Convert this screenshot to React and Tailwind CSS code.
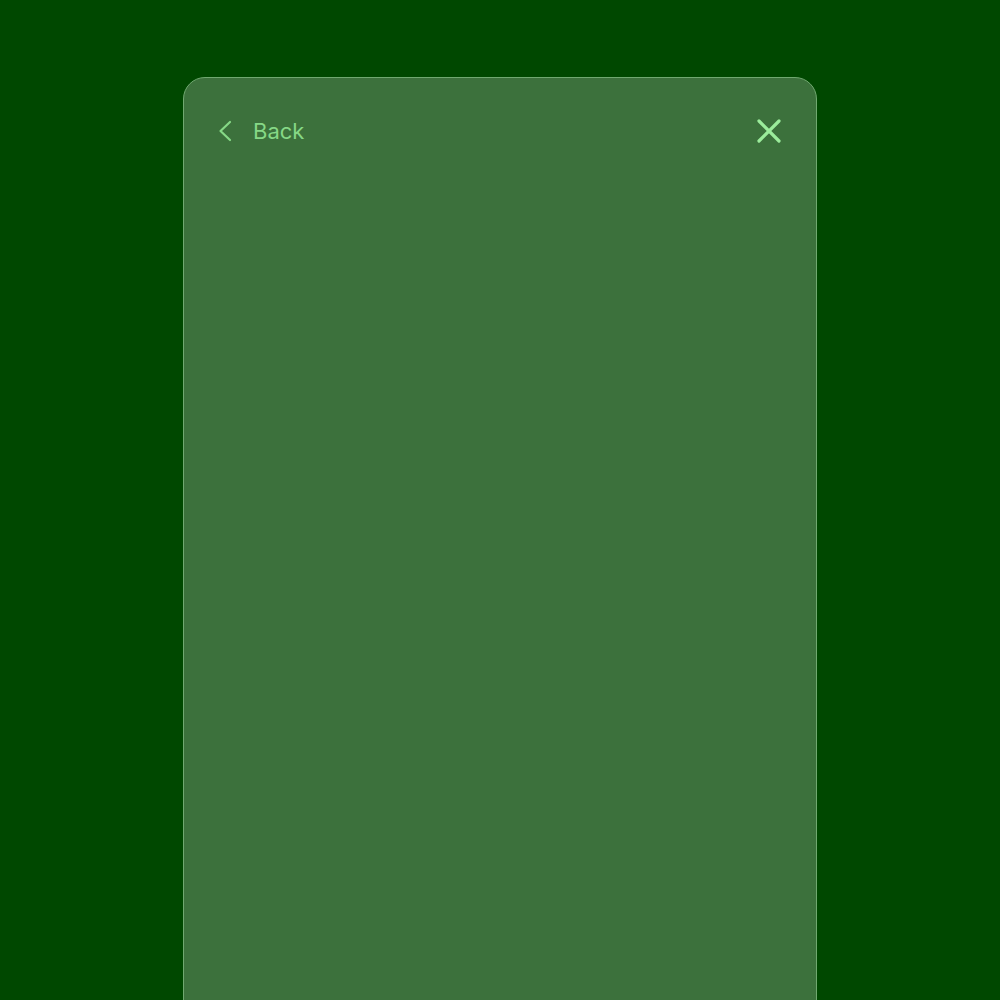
import React from 'react';

const Header = () => (
  <div className="flex items-center justify-between pl-[33px] pr-[34px] pt-[41px]">
    <button className="flex items-center gap-[20px] text-[#86d886]">
      <svg width="16" height="22" viewBox="0 0 16 22" fill="none" stroke="currentColor" strokeWidth="2.2" strokeLinecap="round" strokeLinejoin="round">
        <path d="M13 2 3.5 11 13 20" />
      </svg>
      <span className="text-[22px] leading-[22px] font-['Inter',sans-serif]">Back</span>
    </button>
    <button className="text-[#9bec9b]">
      <svg width="26" height="24" viewBox="0 0 26 24" fill="none" stroke="currentColor" strokeWidth="3.2" strokeLinecap="round">
        <path d="M3 2 23 22M23 2 3 22" />
      </svg>
    </button>
  </div>
);

export default function App() {
  return (
    <div className="h-screen w-full overflow-hidden bg-[#004800] flex justify-center pt-[77px]">
      <div className="w-[634px] h-[1000px] shrink-0 rounded-[22px] bg-[#3c713c] border border-[#70a870]">
        <Header />
      </div>
    </div>
  );
}
